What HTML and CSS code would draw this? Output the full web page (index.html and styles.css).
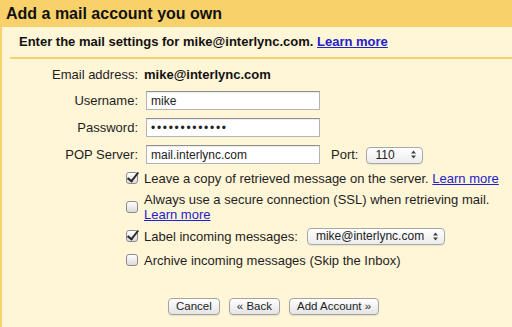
FILE: index.html
```html
<!DOCTYPE html>
<html lang="en">
<head>
  <meta charset="UTF-8" />
  <title>Add a mail account you own</title>
  <link rel="stylesheet" href="styles.css">
</head>
<body>
  <h1 class="title">Add a mail account you own</h1>

  <div class="panel">
    <p class="intro">Enter the mail settings for mike@interlync.com. <a href="#">Learn more</a></p>
    <div class="rule"></div>

    <!-- account fields -->
    <div class="fields">
      <span class="label">Email address:</span>
      <strong class="value">mike@interlync.com</strong>

      <label class="label" for="username">Username:</label>
      <input class="text" id="username" type="text" value="mike">

      <label class="label" for="password">Password:</label>
      <input class="text" id="password" type="password" value="interlync2010">

      <label class="label" for="server">POP Server:</label>
      <div class="inline">
        <input class="text" id="server" type="text" value="mail.interlync.com">
        <label class="port-label" for="port">Port:</label>
        <span class="select">
          <select id="port" class="port"><option>110</option><option>995</option></select>
          <svg class="arrows" width="5" height="9" viewBox="0 0 5 9"><path d="M0 3.5L2.5 0.5L5 3.5Z M0 5.5L2.5 8.5L5 5.5Z" fill="#444"/></svg>
        </span>
      </div>
    </div>

    <!-- options -->
    <div class="options">
      <input type="checkbox" id="leave-copy" checked>
      <label for="leave-copy">Leave a copy of retrieved message on the server. <a href="#">Learn more</a></label>

      <input type="checkbox" id="ssl">
      <label for="ssl">Always use a secure connection (SSL) when retrieving mail. <a href="#">Learn more</a></label>

      <input type="checkbox" id="label-msgs" checked>
      <div class="inline">
        <label for="label-msgs">Label incoming messages:</label>
        <span class="select">
          <select class="label-select"><option>mike@interlync.com</option></select>
          <svg class="arrows" width="5" height="9" viewBox="0 0 5 9"><path d="M0 3.5L2.5 0.5L5 3.5Z M0 5.5L2.5 8.5L5 5.5Z" fill="#444"/></svg>
        </span>
      </div>

      <input type="checkbox" id="archive">
      <label for="archive">Archive incoming messages (Skip the Inbox)</label>
    </div>

    <div class="actions">
      <button type="button">Cancel</button>
      <button type="button">&laquo; Back</button>
      <button type="button">Add Account &raquo;</button>
    </div>
  </div>
</body>
</html>
```

FILE: styles.css
```css
body {
  margin: 0;
  background-color: #fff5d7;
  font-family: 'Liberation Sans', Arial, sans-serif;
  font-size: 13px;
  color: #1e1e1e;
}

a {
  color: #2222cc;
}

.title {
  margin: 0;
  height: 27px;
  padding-left: 6px;
  background-color: #f9d16b;
  font-size: 16px;
  line-height: 27px;
  color: #111;
}

.panel {
  border-left: 2px solid #f9d16b;
  min-height: calc(100vh - 27px);
  box-sizing: border-box;
}

.intro {
  margin: 0;
  height: 30px;
  padding-left: 17px;
  line-height: 30px;
  font-weight: bold;
  color: #111;
}

.rule {
  height: 2px;
  margin-left: 8px;
  background-color: #f9d16b;
}

.fields,
.options {
  display: grid;
  grid-template-columns: 136px 1fr;
  column-gap: 6px;
  align-items: center;
}

.fields {
  margin-top: 7px;
  row-gap: 8px;
  line-height: 17px;
}

.label {
  text-align: right;
}

.value {
  color: #111;
}

.text {
  box-sizing: border-box;
  width: 174px;
  height: 19px;
  margin: 0 0 0 2px;
  padding: 0 4px;
  border: 1px solid #b4b4b4;
  border-top-color: #8f8f8f;
  background-color: #fff;
  box-shadow: inset 0 1px 1px rgba(0, 0, 0, 0.08);
  font-family: 'Liberation Sans', Arial, sans-serif;
  font-size: 12px;
  color: #222;
}

#password {
  font-size: 12px;
  letter-spacing: 1.7px;
}

.inline {
  display: flex;
  align-items: center;
}

.port-label {
  margin: 0 8px 0 11px;
}

.select {
  position: relative;
  display: inline-block;
  height: 17px;
}

.select select {
  appearance: none;
  -webkit-appearance: none;
  box-sizing: border-box;
  height: 17px;
  margin: 0;
  padding: 0 0 0 8px;
  border: 1px solid #a8a8a8;
  border-radius: 4px;
  background: linear-gradient(#ffffff, #ececec);
  box-shadow: 0 1px 1px rgba(0, 0, 0, 0.08);
  font-family: 'Liberation Sans', Arial, sans-serif;
  font-size: 12px;
  color: #222;
}

.port {
  width: 57px;
}

.label-select {
  width: 138px;
}

.arrows {
  position: absolute;
  right: 7px;
  top: 4px;
  pointer-events: none;
}

.options {
  margin-top: 4px;
  row-gap: 4px;
  grid-auto-rows: minmax(20px, auto);
  line-height: 15px;
}

.options input[type="checkbox"] {
  appearance: none;
  -webkit-appearance: none;
  position: relative;
  justify-self: end;
  width: 12px;
  height: 12px;
  margin: 0;
  border: 1px solid #8c8c8c;
  border-radius: 3px;
  background: linear-gradient(#ffffff, #dadada);
}

.options input[type="checkbox"]:checked::after {
  content: "";
  position: absolute;
  left: 3px;
  top: -3px;
  width: 4px;
  height: 10px;
  border: solid #2a2a2a;
  border-width: 0 2.5px 2.5px 0;
  transform: rotate(38deg);
}

.options .inline label {
  margin-right: 9px;
}

.actions {
  display: flex;
  gap: 9px;
  margin-top: 28px;
  padding-left: 166px;
}

button {
  height: 17px;
  padding: 0 7px;
  border: 1px solid #a3a3a3;
  border-radius: 4px;
  background: linear-gradient(#ffffff, #e4e4e4);
  box-shadow: 0 1px 1px rgba(0, 0, 0, 0.1);
  font-family: 'Liberation Sans', Arial, sans-serif;
  font-size: 11.5px;
  line-height: 15px;
  color: #1e1e1e;
  cursor: pointer;
}
```
